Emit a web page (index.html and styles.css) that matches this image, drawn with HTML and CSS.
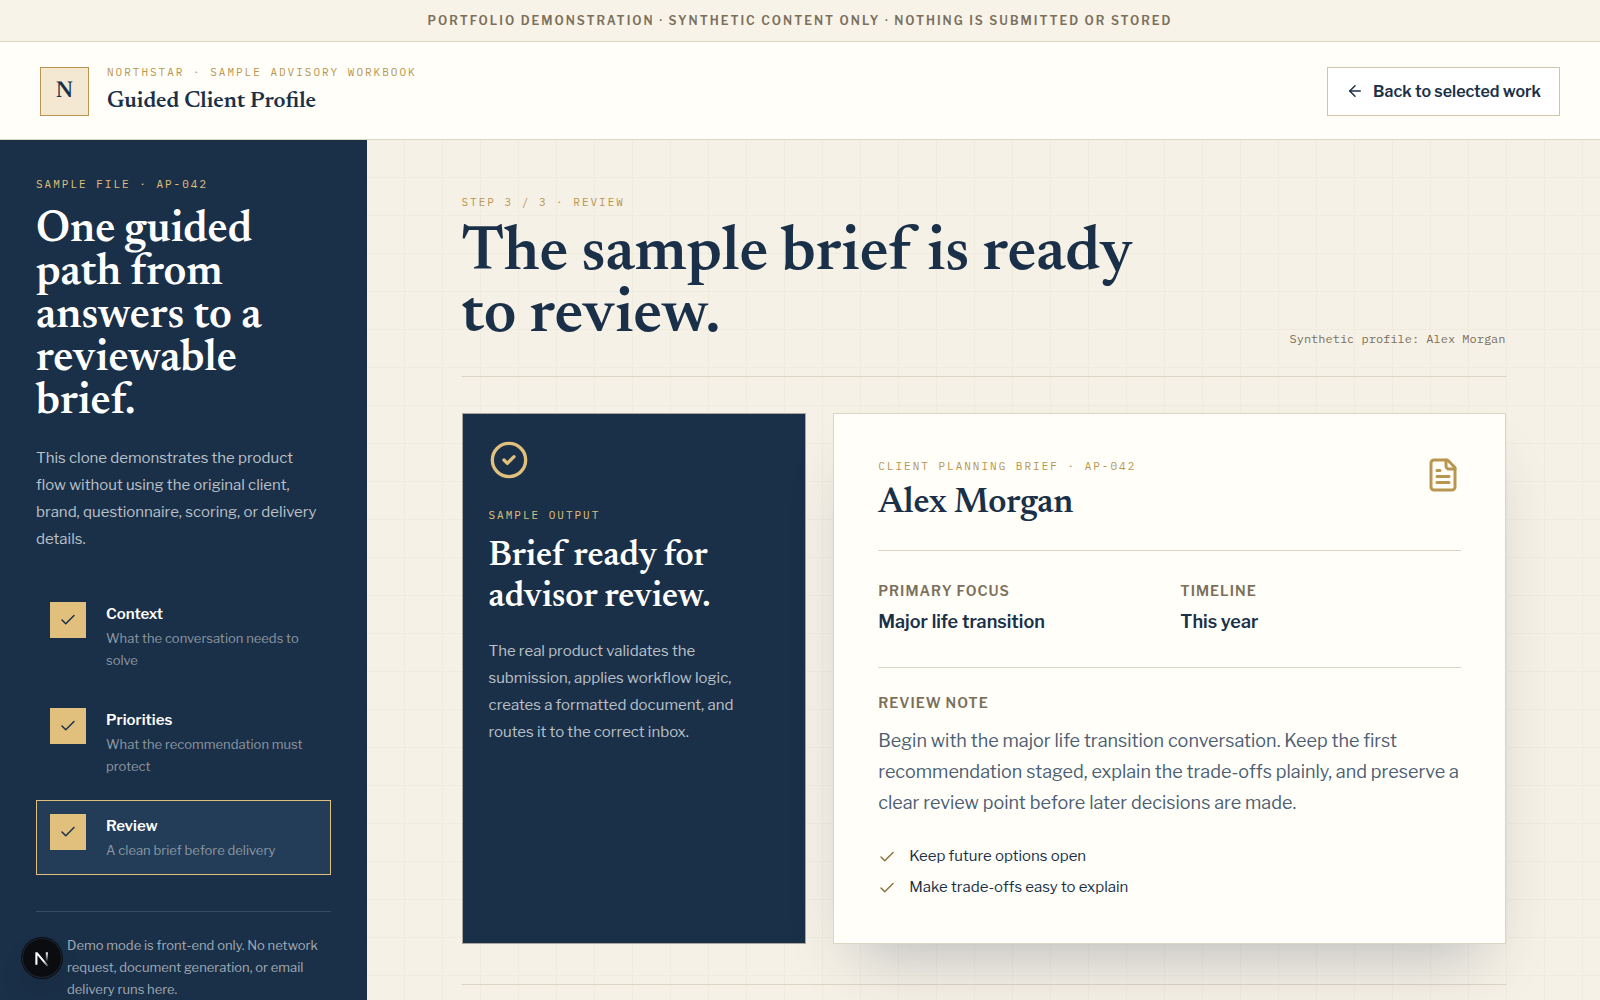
FILE: index.html
```html
<!DOCTYPE html>
<html lang="en">
<head>
    <meta charset="UTF-8">
    <meta name="viewport" content="width=device-width, initial-scale=1">
    <title>Guided Client Profile</title>
    <link rel="stylesheet" href="styles.css">
</head>
<body>
<!-- shared icon shapes -->
<svg class="sprite" aria-hidden="true">
    <symbol id="check" viewBox="0 0 24 24"><path d="M20 6 9 17l-5-5"/></symbol>
    <symbol id="arrow" viewBox="0 0 24 24"><path d="m12 19-7-7 7-7"/><path d="M19 12H5"/></symbol>
</svg>

<p class="banner">Portfolio demonstration · Synthetic content only · Nothing is submitted or stored</p>

<header class="top">
    <div class="brand">
        <span class="logo">N</span>
        <div>
            <p class="eyebrow">Northstar · Sample advisory workbook</p>
            <p class="brand-title">Guided Client Profile</p>
        </div>
    </div>
    <a class="back" href="#">
        <svg class="icon"><use href="#arrow"/></svg>
        Back to selected work
    </a>
</header>

<div class="layout">
    <aside class="side">
        <p class="eyebrow light">Sample file · AP-042</p>
        <h2 class="side-title">One guided path from answers to a reviewable brief.</h2>
        <p class="side-text">This clone demonstrates the product flow without using the original client, brand, questionnaire, scoring, or delivery details.</p>

        <ol class="steps">
            <li class="step">
                <span class="mark"><svg class="icon"><use href="#check"/></svg></span>
                <div>
                    <strong>Context</strong>
                    <p>What the conversation needs to solve</p>
                </div>
            </li>
            <li class="step">
                <span class="mark"><svg class="icon"><use href="#check"/></svg></span>
                <div>
                    <strong>Priorities</strong>
                    <p>What the recommendation must protect</p>
                </div>
            </li>
            <li class="step active" aria-current="step">
                <span class="mark"><svg class="icon"><use href="#check"/></svg></span>
                <div>
                    <strong>Review</strong>
                    <p>A clean brief before delivery</p>
                </div>
            </li>
        </ol>

        <p class="side-note">Demo mode is front-end only. No network request, document generation, or email delivery runs here.</p>
    </aside>

    <main class="main">
        <div class="content">
            <div class="heading">
                <div>
                    <p class="eyebrow">Step 3 / 3 · Review</p>
                    <h1>The sample brief is ready to review.</h1>
                </div>
                <p class="profile">Synthetic profile: Alex Morgan</p>
            </div>

            <div class="cards">
                <section class="output">
                    <svg class="icon-ring" viewBox="0 0 24 24"><circle cx="12" cy="12" r="10"/><path d="m9 12 2 2 4-4"/></svg>
                    <p class="eyebrow light">Sample output</p>
                    <h2>Brief ready for advisor review.</h2>
                    <p class="output-text">The real product validates the submission, applies workflow logic, creates a formatted document, and routes it to the correct inbox.</p>
                </section>

                <article class="brief">
                    <div class="brief-head">
                        <div>
                            <p class="eyebrow">Client planning brief · AP-042</p>
                            <h2>Alex Morgan</h2>
                        </div>
                        <svg class="icon-file" viewBox="0 0 24 24"><path d="M15 2H6a2 2 0 0 0-2 2v16a2 2 0 0 0 2 2h12a2 2 0 0 0 2-2V7Z"/><path d="M14 2v4a2 2 0 0 0 2 2h4"/><path d="M10 9H8"/><path d="M16 13H8"/><path d="M16 17H8"/></svg>
                    </div>
                    <dl class="facts">
                        <div>
                            <dt class="label">Primary focus</dt>
                            <dd>Major life transition</dd>
                        </div>
                        <div>
                            <dt class="label">Timeline</dt>
                            <dd>This year</dd>
                        </div>
                    </dl>
                    <h3 class="label">Review note</h3>
                    <p class="note">Begin with the major life transition conversation. Keep the first recommendation staged, explain the trade-offs plainly, and preserve a clear review point before later decisions are made.</p>
                    <ul class="points">
                        <li><svg class="icon"><use href="#check"/></svg>Keep future options open</li>
                        <li><svg class="icon"><use href="#check"/></svg>Make trade-offs easy to explain</li>
                    </ul>
                </article>
            </div>

            <div class="actions"></div>
        </div>
    </main>
</div>

<button class="badge" type="button" aria-label="Open dev tools">
    <svg viewBox="0 0 40 40">
        <defs>
            <linearGradient id="fade-a" x1="0" y1="0" x2="1" y2="1"><stop offset=".6" stop-color="#fff"/><stop offset="1" stop-color="#fff" stop-opacity=".1"/></linearGradient>
            <linearGradient id="fade-b" x1="0" y1="0" x2="0" y2="1"><stop offset="0" stop-color="#fff"/><stop offset="1" stop-color="#fff" stop-opacity="0"/></linearGradient>
        </defs>
        <path d="M13 27V14h2.200l11.800 14-2 1-9.800-12v10Z" fill="url(#fade-a)"/>
        <path d="M24 14h2.200v10h-2.200Z" fill="url(#fade-b)"/>
    </svg>
</button>
</body>
</html>
```
FILE: styles.css
```css
:root {
    --navy: #1a3048;
    --gold: #b8964f;
    --gold-light: #e0c07c;
    --line: #ddd5c4;
    --paper: #fffef9;
    --muted: #7c705b;
    --serif: "Newsreader", "Liberation Serif", serif;
    --sans: "Libre Franklin", "Inter", sans-serif;
    --mono: "IBM Plex Mono", "Liberation Mono", monospace;
}

* {
    box-sizing: border-box;
    margin: 0;
    padding: 0;
}

body {
    background: #f6f1e6;
    color: var(--navy);
    font-family: var(--sans);
    font-size: 15px;
    line-height: 27px;
}

ul, ol {
    list-style: none;
}

h1, h2, .brand-title, .logo {
    font-family: var(--serif);
    font-weight: 600;
}

.sprite {
    display: none;
}

.icon, .icon-ring, .icon-file {
    flex: none;
    width: 18px;
    height: 18px;
    fill: none;
    stroke: currentColor;
    stroke-width: 2;
    stroke-linecap: round;
    stroke-linejoin: round;
}

.eyebrow {
    font-family: var(--mono);
    font-size: 11px;
    line-height: 18px;
    letter-spacing: 2px;
    text-transform: uppercase;
    color: var(--gold);
}

.eyebrow.light {
    color: var(--gold-light);
}

.label {
    font-size: 14px;
    font-weight: 600;
    line-height: 22px;
    letter-spacing: 1px;
    text-transform: uppercase;
    color: var(--muted);
}

/* top */
.banner {
    padding: 10px 20px;
    border-bottom: 1px solid var(--line);
    background: #f8f3e9;
    color: var(--muted);
    font-size: 12px;
    font-weight: 600;
    line-height: 21px;
    letter-spacing: 2px;
    text-align: center;
    text-transform: uppercase;
}

.top {
    display: flex;
    align-items: center;
    justify-content: space-between;
    padding: 21px 40px 20px;
    border-bottom: 1px solid var(--line);
    background: var(--paper);
}

.brand {
    display: flex;
    align-items: center;
    gap: 18px;
}

.logo {
    width: 49px;
    height: 49px;
    border: 1px solid var(--gold);
    background: #f4e8d3;
    font-size: 23px;
    line-height: 47px;
    text-align: center;
}

.brand-title {
    margin-top: 4px;
    font-size: 23px;
    line-height: 34px;
}

.back {
    display: flex;
    align-items: center;
    gap: 9px;
    height: 49px;
    padding: 0 18px;
    border: 1px solid #cfc4ae;
    background: #fff;
    color: var(--navy);
    font-size: 16px;
    font-weight: 600;
    text-decoration: none;
}

/* sidebar */
.layout {
    display: grid;
    grid-template-columns: 367px 1fr;
}

.side {
    padding: 35px 36px;
    background: var(--navy);
    color: #fff;
}

.side-title {
    margin-top: 17px;
    font-size: 44px;
    line-height: 43px;
}

.side-text {
    margin-top: 20px;
    padding-right: 8px;
    color: #bac1c8;
}

.steps {
    display: grid;
    gap: 9px;
    margin-top: 35px;
}

.step {
    display: flex;
    gap: 20px;
    padding: 13px;
    border: 1px solid transparent;
}

.step.active {
    border-color: var(--gold-light);
    background: #233d58;
}

.mark {
    display: grid;
    flex: none;
    place-items: center;
    width: 36px;
    height: 36px;
    background: var(--gold-light);
    color: var(--navy);
}

.step strong {
    display: block;
    font-weight: 600;
    line-height: 25px;
}

.step p {
    color: #8d98a3;
    font-size: 13px;
    line-height: 22px;
}

.side-note {
    margin-top: 36px;
    padding: 22px 0 0 31px;
    border-top: 1px solid #374b61;
    color: #a3acb6;
    font-size: 13px;
    line-height: 22px;
}

/* main */
.main {
    padding: 53px 94px;
    background-image:
        linear-gradient(to left, #f0ebdf 1px, transparent 1px),
        linear-gradient(to top, #f0ebdf 1px, transparent 1px);
    background-size: 38px 38px;
}

.content {
    max-width: 1044px;
    margin: 0 auto;
}

.heading {
    display: flex;
    align-items: flex-end;
    justify-content: space-between;
    gap: 36px;
    padding-bottom: 27px;
    border-bottom: 1px solid var(--line);
}

h1 {
    max-width: 700px;
    margin: 13px 0 1px;
    font-size: 63px;
    line-height: 62px;
}

.profile {
    flex: none;
    color: var(--muted);
    font-family: var(--mono);
    font-size: 12px;
    line-height: 20px;
}

.cards {
    display: grid;
    grid-template-columns: 1fr 1.95fr;
    gap: 27px;
    margin-top: 36px;
}

.output {
    padding: 26px;
    border: 1px solid #a9a69d;
    background: var(--navy);
    color: #fff;
}

.icon-ring {
    display: block;
    width: 40px;
    height: 40px;
    margin-bottom: 26px;
    color: var(--gold-light);
}

.output h2 {
    margin-top: 12px;
    font-size: 35px;
    line-height: 41px;
}

.output-text {
    margin-top: 20px;
    color: #bac1c8;
}

.brief {
    padding: 43px 44px 42px;
    border: 1px solid var(--line);
    background: var(--paper);
    box-shadow: 0 34px 60px -24px rgba(26, 48, 72, .28);
}

.brief-head {
    display: flex;
    justify-content: space-between;
    padding-bottom: 22px;
    border-bottom: 1px solid var(--line);
}

.brief-head h2 {
    margin-top: 4px;
    font-size: 35px;
    line-height: 49px;
}

.icon-file {
    width: 36px;
    height: 36px;
    color: var(--gold);
}

.facts {
    display: grid;
    grid-template-columns: 1fr 1fr;
    gap: 22px;
    margin-bottom: 24px;
    padding: 29px 0 32px;
    border-bottom: 1px solid var(--line);
}

.facts dd {
    margin-top: 6px;
    font-size: 18px;
    font-weight: 600;
}

.note {
    margin-top: 11px;
    color: #4d5f73;
    font-size: 18px;
    line-height: 31px;
}

.points {
    display: grid;
    gap: 4px;
    margin-top: 25px;
}

.points li {
    display: flex;
    align-items: center;
    gap: 13px;
}

.points .icon {
    color: #8f7441;
}

.actions {
    height: 80px;
    margin-top: 40px;
    border-top: 1px solid var(--line);
}

.badge {
    position: fixed;
    bottom: 23px;
    left: 23px;
    width: 38px;
    height: 38px;
    border: 0;
    border-radius: 50%;
    background: #0a0c10;
    box-shadow: 0 0 0 1px #1c2735, 0 0 0 2px #0a0c10, 0 16px 32px -8px rgba(0, 0, 0, .24);
}
```
